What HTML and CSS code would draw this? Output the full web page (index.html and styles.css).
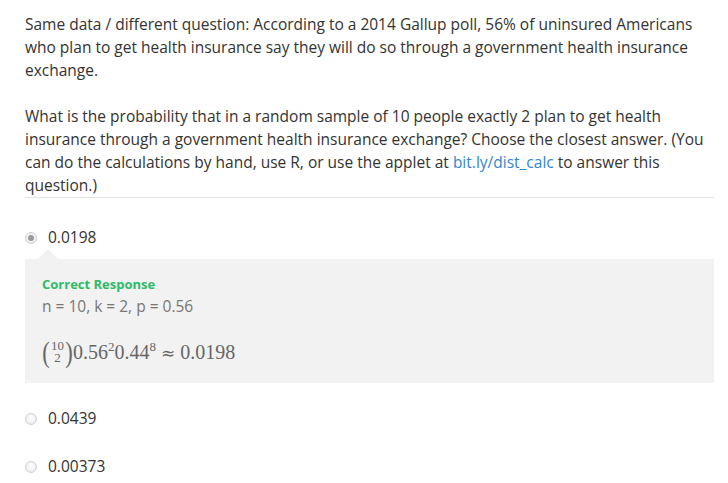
FILE: index.html
```html
<!DOCTYPE html>
<html>
<head>
<meta charset="utf-8">
<link rel="stylesheet" href="styles.css">
</head>
<body>
<div class="question">
  <div class="prompt">
    <p>Same data / different question: According to a 2014 Gallup poll, 56% of uninsured Americans who plan to get health insurance say they will do so through a government health insurance exchange.</p>
    <p>What is the probability that in a random sample of 10 people exactly 2 plan to get health insurance through a government health insurance exchange? Choose the closest answer. (You can do the calculations by hand, use R, or use the applet at <a href="#">bit.ly/dist_calc</a> to answer this question.)</p>
  </div>
  <div class="options">
    <div class="option selected">
      <span class="radio"></span><span class="label">0.0198</span>
    </div>
    <div class="feedback">
      <div class="fb-title">Correct Response</div>
      <div class="fb-text">n = 10, k = 2, p = 0.56</div>
      <div class="formula"><span class="paren">(</span><span class="binom"><span>10</span><span>2</span></span><span class="paren">)</span>0.56<sup>2</sup>0.44<sup>8</sup> <span class="approx">≈</span> 0.0198</div>
    </div>
    <div class="option">
      <span class="radio"></span><span class="label">0.0439</span>
    </div>
    <div class="option">
      <span class="radio"></span><span class="label">0.00373</span>
    </div>
  </div>
</div>
</body>
</html>
```

FILE: styles.css
```css
html, body {
  margin: 0;
  padding: 0;
  background: #ffffff;
}
body {
  font-family: "Open Sans", "Noto Sans", sans-serif;
  font-size: 15.5px;
  line-height: 23px;
  color: #333333;
}
.question {
  width: 689px;
  margin-left: 25px;
  padding-top: 13px;
}
.prompt {
  border-bottom: 1px solid #e2e2e2;
}
.prompt p {
  margin: 0 0 23px 0;
}
.prompt p:last-child {
  margin-bottom: 0;
}
.prompt a {
  color: #2f86d1;
  text-decoration: none;
}
.options {
  padding-top: 28px;
}
.option {
  display: flex;
  align-items: center;
  height: 23px;
}
.radio {
  width: 10px;
  height: 10px;
  border-radius: 50%;
  border: 1px solid #d0d0d0;
  background: radial-gradient(circle at 50% 40%, #ffffff 0%, #f0f0f0 60%, #e2e2e2 100%);
  margin: 0 11px 0 0;
  position: relative;
  flex: none;
}
.option.selected .radio::after {
  content: "";
  position: absolute;
  left: 2px;
  top: 2px;
  width: 6px;
  height: 6px;
  border-radius: 50%;
  background: #9a9a9a;
}
.feedback {
  position: relative;
  background: #f2f2f2;
  margin-top: 10px;
  margin-bottom: 24px;
  padding: 15px 17px 16px 17px;
}
.feedback::before {
  content: "";
  position: absolute;
  left: 13px;
  top: -10px;
  border-left: 10px solid transparent;
  border-right: 10px solid transparent;
  border-bottom: 10px solid #f2f2f2;
}
.fb-title {
  font-size: 13px;
  font-weight: 700;
  line-height: 21px;
  color: #2dbb6a;
}
.fb-text {
  color: #777777;
}
.formula {
  margin-top: 19px;
  height: 30px;
  line-height: 30px;
  font-family: "Liberation Serif", "DejaVu Serif", serif;
  font-size: 20px;
  color: #666666;
  white-space: nowrap;
}
.formula sup {
  font-size: 13px;
  line-height: 1;
  vertical-align: 8px;
}
.paren {
  display: inline-block;
  font-size: 30px;
  line-height: 30px;
  vertical-align: top;
  transform: scaleX(0.75);
  margin: 0 -1px;
}
.binom {
  display: inline-flex;
  flex-direction: column;
  align-items: center;
  font-size: 13px;
  line-height: 12px;
  vertical-align: middle;
  position: relative;
  top: -2px;
  margin: 0 1px;
}
.approx {
  font-family: "DejaVu Serif", serif;
  font-size: 17px;
}
.option + .option {
  margin-top: 25px;
}
```
